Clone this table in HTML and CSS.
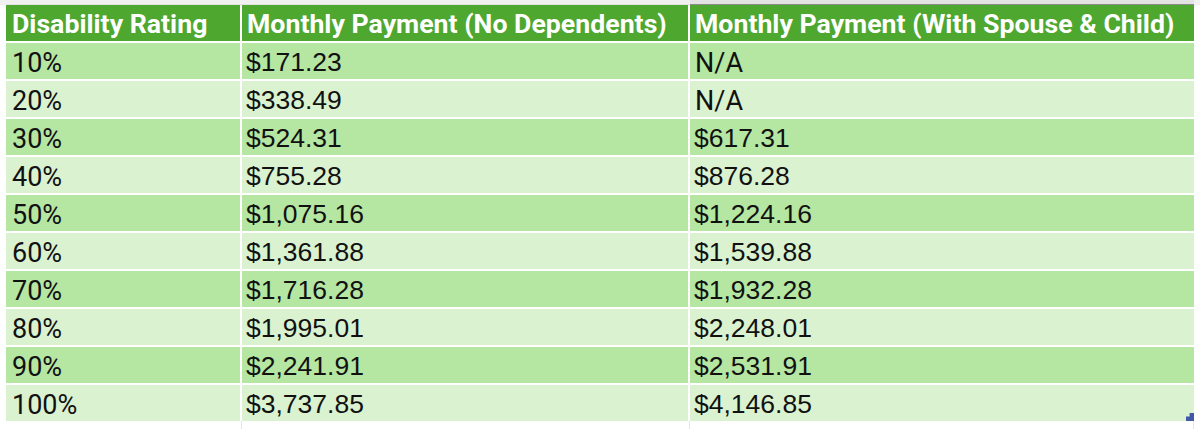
FILE: index.html
```html
<!DOCTYPE html>
<html lang="en">
<head>
<meta charset="utf-8">
<title>VA Disability Compensation Rates</title>
<link rel="stylesheet" href="styles.css">
</head>
<body>
<div class="sheet">
  <div class="topstrip">
    <div class="ts ts-a"></div>
    <div class="ts ts-b"></div>
    <div class="ts ts-c"></div>
  </div>
  <div class="table">
    <div class="cell head c1">Disability Rating</div>
    <div class="cell head">Monthly Payment (No Dependents)</div>
    <div class="cell head">Monthly Payment (With Spouse &amp; Child)</div>

    <div class="cell odd c1">10%</div><div class="cell odd num">$171.23</div><div class="cell odd na">N/A</div>
    <div class="cell even c1">20%</div><div class="cell even num">$338.49</div><div class="cell even na">N/A</div>
    <div class="cell odd c1">30%</div><div class="cell odd num">$524.31</div><div class="cell odd num">$617.31</div>
    <div class="cell even c1">40%</div><div class="cell even num">$755.28</div><div class="cell even num">$876.28</div>
    <div class="cell odd c1">50%</div><div class="cell odd num">$1,075.16</div><div class="cell odd num">$1,224.16</div>
    <div class="cell even c1">60%</div><div class="cell even num">$1,361.88</div><div class="cell even num">$1,539.88</div>
    <div class="cell odd c1">70%</div><div class="cell odd num">$1,716.28</div><div class="cell odd num">$1,932.28</div>
    <div class="cell even c1">80%</div><div class="cell even num">$1,995.01</div><div class="cell even num">$2,248.01</div>
    <div class="cell odd c1">90%</div><div class="cell odd num">$2,241.91</div><div class="cell odd num">$2,531.91</div>
    <div class="cell even c1">100%</div><div class="cell even num">$3,737.85</div><div class="cell even num">$4,146.85</div>
    <span class="handle"></span>
  </div>
  <div class="tail">
    <div class="tl"></div><div class="tl"></div><div class="tl"></div>
  </div>
</div>
</body>
</html>
```
FILE: styles.css
```css
html, body {
  margin: 0;
  padding: 0;
  background: #ffffff;
}

.sheet {
  width: 1200px;
  height: 430px;
  overflow: hidden;
  padding-left: 6px;
  box-sizing: border-box;
  background: #ffffff;
}

.topstrip {
  display: grid;
  grid-template-columns: 236px 448px 504px;
  height: 5px;
  margin-left: -6px;
  padding-left: 6px;
  background: #f1f1f1;
}

.ts-a, .ts-b {
  background: #f1f1f1;
  border-bottom: 1px solid #e2e2e2;
}

.ts-c {
  background: #e3e3e3;
  border-bottom: 1px solid #8c8c8c;
}

.table {
  position: relative;
  display: grid;
  grid-template-columns: 234px 446px 504px;
  grid-auto-rows: 36px;
  column-gap: 2px;
  row-gap: 2px;
  background: #ffffff;
  width: 1188px;
  height: 416px;
}

.cell {
  display: flex;
  align-items: center;
  padding: 3px 0 0 5px;
  box-sizing: border-box;
  white-space: nowrap;
  font-family: "Liberation Sans", Arial, sans-serif;
  font-size: 26.5px;
  color: #111111;
}

.cell.num {
  padding-left: 4px;
}

.cell.c1 {
  padding-left: 6px;
}

.head {
  background: #4ea72e;
  color: #ffffff;
  font-family: Roboto, "Liberation Sans", sans-serif;
  font-weight: 700;
  font-size: 26.7px;
  padding-top: 2px;
}

.odd {
  background: #b5e6a2;
}

.even {
  background: #daf2d0;
}

.c1:not(.head), .na {
  font-family: Roboto, "Liberation Sans", sans-serif;
  font-size: 27px;
}

.handle {
  position: absolute;
  right: 0;
  bottom: 0;
  width: 8px;
  height: 8px;
  background: #4357a8;
  clip-path: polygon(100% 0, 100% 100%, 0 100%, 0 45%, 45% 45%, 45% 0);
}

.tail {
  display: grid;
  grid-template-columns: 236px 448px 504px;
  height: 8px;
}

.tl {
  border-right: 1px solid #e4e4e4;
  box-sizing: border-box;
}
```
